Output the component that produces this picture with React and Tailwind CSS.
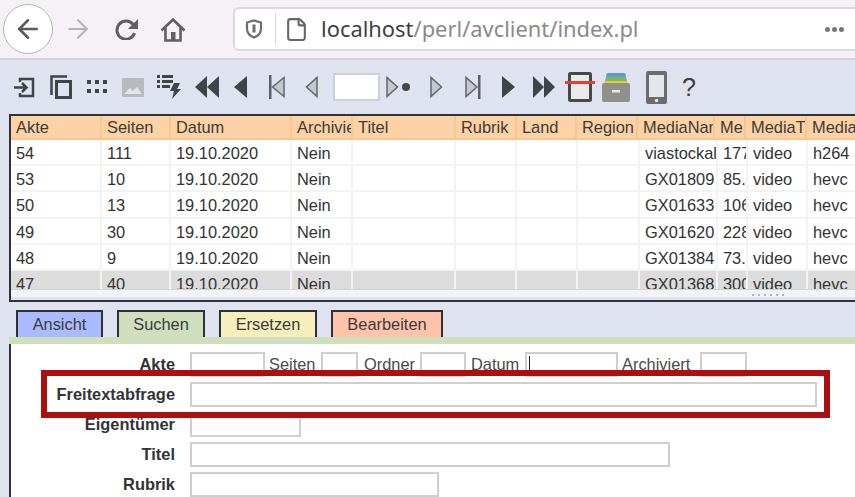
import React from "react";
import { ArrowLeft, ArrowRight, File } from "lucide-react";

const HEAD = ["Akte", "Seiten", "Datum", "Archiviert", "Titel", "Rubrik", "Land", "Region", "MediaName", "Me", "MediaType", "MediaCodec"];

const ROWS = [
  ["54", "111", "viastockal", "177.5", "h264"],
  ["53", "10", "GX01809", "85.12", "hevc"],
  ["50", "13", "GX01633", "106.4", "hevc"],
  ["49", "30", "GX01620", "228.1", "hevc"],
  ["48", "9", "GX01384", "73.21", "hevc"],
  ["47", "40", "GX01368", "300.2", "hevc"],
];

const inputCls = "h-[25px] border-2 border-[#cfcfcf] bg-white shrink-0 outline-none";

function Chrome() {
  return (
    <div className="h-[60px] bg-[#f6f1f6] border-b-2 border-[#d6d3d6] flex items-center shrink-0">
      <div className="w-[50px] h-[50px] ml-[3px] rounded-full bg-white border border-[#b5b3b5] flex items-center justify-center shrink-0">
        <ArrowLeft size={30} strokeWidth={2} className="text-[#5b5b5f]" />
      </div>
      <ArrowRight size={30} strokeWidth={1.6} className="text-[#b4b3b7] ml-[10px] shrink-0" />
      <svg width="24" height="22" viewBox="0 0 24 22" fill="none" className="ml-[22px] shrink-0">
        <path d="M18 6.500A9 9 0 1 0 19.500 15" stroke="#5f5f63" strokeWidth="3" />
        <path d="M23 1v10H13z" fill="#5f5f63" />
      </svg>
      <svg width="26" height="25" viewBox="0 0 26 25" fill="none" className="ml-[21px] shrink-0">
        <path d="M1.500 13.500 13 2.500l11.500 11" stroke="#5f5f63" strokeWidth="2.600" />
        <path d="M5.500 10.500V23.500h15V10.500" stroke="#5f5f63" strokeWidth="2.600" />
        <rect x="11" y="15" width="4.500" height="8" fill="#5f5f63" />
      </svg>
      <div className="ml-[47px] flex-1 h-[44px] bg-white border-2 border-r-0 border-[#dcd9dc] rounded-l-md flex items-center font-['Noto_Sans',sans-serif] text-[21.900px] text-[#8a898d]">
        <svg width="18" height="20" viewBox="0 0 18 20" className="ml-[10px] shrink-0" fill="none">
          <path d="M2 3.500 9 1.500l7 2v6c0 4.500-3 7.500-7 9-4-1.500-7-4.500-7-9z" stroke="#6e6e72" strokeWidth="2.200" />
          <path d="M9 5.500v8" stroke="#6e6e72" strokeWidth="3" />
        </svg>
        <div className="w-px h-[32px] bg-[#d9d7d9] ml-[12px] shrink-0" />
        <File size={25} strokeWidth={2} className="text-[#66666a] ml-[8px] shrink-0" />
        <span className="ml-[12px] whitespace-nowrap">
          <span className="text-[#3f3f42]">localhost</span>/perl/avclient/index.pl
        </span>
        <span className="ml-auto mr-[11px] flex gap-[2px]">
          <i className="w-[5px] h-[5px] rounded-full bg-[#77777b]" />
          <i className="w-[5px] h-[5px] rounded-full bg-[#77777b]" />
          <i className="w-[5px] h-[5px] rounded-full bg-[#77777b]" />
        </span>
      </div>
    </div>
  );
}

const DK = "#3f4447";
const GY = "#c4c7cc";

function Toolbar() {
  return (
    <div className="h-[54px] bg-[#dfe3ef] flex items-center shrink-0">
      <svg width="21" height="21" viewBox="0 0 21 21" fill="none" className="ml-[14px] shrink-0">
        <path d="M6 5V2h13v17H6v-3" stroke={DK} strokeWidth="2.500" />
        <path d="M0 10.500h12M8 6l4.500 4.500L8 15" stroke={DK} strokeWidth="2.500" />
      </svg>
      <svg width="22" height="24" viewBox="0 0 22 24" fill="none" className="ml-[15px] shrink-0">
        <path d="M1.500 20V1.500H17" stroke={DK} strokeWidth="2.500" />
        <rect x="6.500" y="6.500" width="14" height="16" stroke={DK} strokeWidth="3" />
      </svg>
      <svg width="21" height="14" viewBox="0 0 21 14" className="ml-[15px] shrink-0" fill={DK}>
        <rect x="0" y="0" width="4" height="4" /><rect x="8" y="0" width="4" height="4" /><rect x="16" y="0" width="4" height="4" />
        <rect x="0" y="9" width="4" height="4" /><rect x="8" y="9" width="4" height="4" /><rect x="16" y="9" width="4" height="4" />
      </svg>
      <svg width="22" height="19" viewBox="0 0 22 19" className="ml-[14px] shrink-0">
        <rect width="22" height="19" rx="1" fill="#b9babd" />
        <path d="M2 16l6-6 3 3 4-4 5 7z" fill="#e4e5e8" />
      </svg>
      <svg width="24" height="24" viewBox="0 0 24 24" className="ml-[13px] shrink-0" fill={DK}>
        <rect x="0" y="0" width="3" height="3" /><rect x="5" y="0" width="11" height="3" />
        <rect x="0" y="5" width="3" height="3" /><rect x="5" y="5" width="11" height="3" />
        <rect x="0" y="10" width="3" height="3" /><rect x="5" y="10" width="8" height="3" />
        <path d="M17 8h6l-3 6h4L15 24l2-8h-4z" />
      </svg>
      <svg width="24" height="22" viewBox="0 0 24 22" className="ml-[14px] shrink-0" fill={DK}>
        <path d="M12 0v22L0 11zM24 0v22L12 11z" />
      </svg>
      <svg width="13" height="22" viewBox="0 0 13 22" className="ml-[15px] shrink-0" fill={DK}>
        <path d="M13 0v22L0 11z" />
      </svg>
      <svg width="16" height="24" viewBox="0 0 16 24" className="ml-[22px] shrink-0">
        <rect x="0" y="0" width="2.500" height="24" fill="#5d6167" />
        <path d="M15 2.500v19L3.500 12z" fill={GY} stroke="#62666b" strokeWidth="1.500" />
      </svg>
      <svg width="13" height="24" viewBox="0 0 13 24" className="ml-[20px] shrink-0">
        <path d="M12 2.500v19L1.500 12z" fill={GY} stroke="#62666b" strokeWidth="1.500" />
      </svg>
      <input readOnly className="w-[47px] h-[28px] ml-[15px] bg-white border-2 border-[#cfd0d3] shrink-0 outline-none" />
      <svg width="13" height="24" viewBox="0 0 13 24" className="ml-[6px] shrink-0">
        <path d="M1 2.500v19L11.500 12z" fill={GY} stroke="#62666b" strokeWidth="1.500" />
      </svg>
      <span className="w-[8px] h-[8px] rounded-full bg-[#44484b] ml-[3px] shrink-0" />
      <svg width="13" height="24" viewBox="0 0 13 24" className="ml-[20px] shrink-0">
        <path d="M1 2.500v19L11.500 12z" fill={GY} stroke="#62666b" strokeWidth="1.500" />
      </svg>
      <svg width="16" height="24" viewBox="0 0 16 24" className="ml-[22px] shrink-0">
        <path d="M1 2.500v19L12 12z" fill={GY} stroke="#62666b" strokeWidth="1.500" />
        <rect x="13" y="0" width="2.500" height="24" fill="#5d6167" />
      </svg>
      <svg width="13" height="22" viewBox="0 0 13 22" className="ml-[21px] shrink-0" fill={DK}>
        <path d="M0 0v22L13 11z" />
      </svg>
      <svg width="22" height="22" viewBox="0 0 22 22" className="ml-[18px] shrink-0" fill={DK}>
        <path d="M0 0v22L11 11zM11 0v22L22 11z" />
      </svg>
      <svg width="30" height="30" viewBox="0 0 30 30" className="ml-[10px] shrink-0">
        <rect x="4.500" y="1.500" width="21" height="27" rx="1" fill="#ebebec" stroke="#46494b" strokeWidth="3" />
        <rect x="0" y="9" width="30" height="3" fill="#ee3b30" />
      </svg>
      <svg width="28" height="29" viewBox="0 0 28 29" className="ml-[7px] shrink-0">
        <path d="M5 0h18l1 4H4z" fill="#5b9bd8" />
        <path d="M4 4h20l1 4H3z" fill="#7dbb5a" />
        <path d="M3 8h22l1 4H2z" fill="#f2c53a" />
        <rect x="0" y="10" width="28" height="19" rx="2" fill="#8f8f8c" />
        <rect x="10" y="17" width="8" height="2.500" fill="#e9e9e9" />
      </svg>
      <svg width="21" height="33" viewBox="0 0 21 33" className="ml-[16px] shrink-0">
        <rect width="21" height="33" rx="2" fill="#6c6c6e" />
        <rect x="3" y="4" width="15" height="22" fill="#e4e6ed" />
        <circle cx="10.500" cy="29.500" r="1.800" fill="#e4e6ed" />
      </svg>
      <span className="ml-[15px] text-[25px] leading-none text-[#3a3c3e]">?</span>
    </div>
  );
}

function Table() {
  return (
    <div className="relative ml-[9px] h-[188px] border-2 border-[#2f3338] border-r-0 bg-[#dfe3ef] overflow-hidden shrink-0">
      <div className="grid grid-cols-[91px_69px_121px_61px_103px_61px_60px_61px_77px_31px_61px_60px] h-[24px] bg-[#fdd2a4] border-b-2 border-[#f6c695] text-[16.400px] text-[#3b3b3b]">
        {HEAD.map((h) => (
          <div key={h} className="pl-[5px] border-r-2 border-[#f6c695] overflow-hidden whitespace-nowrap leading-[22px]">
            {h}
          </div>
        ))}
      </div>
      <div className="h-[149px] bg-white overflow-hidden">
        {ROWS.map((r) => (
          <div
            key={r[0]}
            className={`grid grid-cols-[91px_69px_121px_61px_103px_61px_61px_62px_78px_30px_60px_60px] h-[26.200px] text-[#333] text-[16.400px] ${
              r[0] === "47" ? "bg-[#dcdcdc]" : "bg-white"
            }`}
          >
            {[r[0], r[1], "19.10.2020", "Nein", "", "", "", "", r[2], r[3], "video", r[4]].map((c, i) => (
              <div key={i} className="pl-[5px] border-r-2 border-b-2 border-[#f3f3f3] overflow-hidden whitespace-nowrap leading-[26px]">
                {c}
              </div>
            ))}
          </div>
        ))}
      </div>
      <div className="h-[8px] bg-[#f3f3f3] border-t border-[#d4d4d4]" />
      <svg width="34" height="4" viewBox="0 0 34 4" className="absolute left-[741px] top-[177px]" fill="#b5b5b5">
        <rect x="0" y="1" width="2" height="2" /><rect x="6" y="1" width="2" height="2" /><rect x="12" y="1" width="2" height="2" />
        <rect x="18" y="1" width="2" height="2" /><rect x="24" y="1" width="2" height="2" /><rect x="30" y="1" width="2" height="2" />
      </svg>
    </div>
  );
}

function Tab({ label, className }) {
  return (
    <div className={`h-[27px] border-2 border-b-0 border-[#2f3338] text-center text-[16.400px] leading-[24px] text-[#3b3b3b] ${className}`}>
      {label}
    </div>
  );
}

function Label({ children, className }) {
  return <span className={`text-[16.400px] text-[#4a4a4a] whitespace-nowrap shrink-0 ${className}`}>{children}</span>;
}

function FormRow({ label, w }) {
  return (
    <div className="flex items-center h-[25px] mt-[5px]">
      <span className="w-[164px] text-right font-bold text-[16.400px] text-[#333] whitespace-nowrap">{label}</span>
      <input readOnly className={`${inputCls} ml-[15px] ${w}`} />
    </div>
  );
}

function Form() {
  return (
    <div className="ml-[9px] border-l-2 border-[#2f3338] bg-white flex-1">
      <div className="h-[7px] bg-[#cfdfbd] -ml-[2px]" />
      <div className="pt-[8px]">
        <div className="flex items-center h-[25px]">
          <span className="w-[164px] text-right font-bold text-[16.400px] text-[#333]">Akte</span>
          <input readOnly className={`${inputCls} ml-[15px] w-[75px]`} />
          <Label className="ml-[4px] w-[52px]">Seiten</Label>
          <input readOnly className={`${inputCls} w-[37px]`} />
          <Label className="ml-[6px] w-[56px]">Ordner</Label>
          <input readOnly className={`${inputCls} w-[46px]`} />
          <Label className="ml-[5px] w-[54px]">Datum</Label>
          <div className={`${inputCls} relative w-[93px]`}>
            <span className="absolute left-[2px] top-[2px] w-px h-[18px] bg-[#222]" />
          </div>
          <Label className="ml-[4px] w-[78px]">Archiviert</Label>
          <input readOnly className={`${inputCls} w-[47px]`} />
        </div>
        <FormRow label="Freitextabfrage" w="w-[627px]" />
        <FormRow label="Eigentümer" w="w-[111px]" />
        <FormRow label="Titel" w="w-[480px]" />
        <FormRow label="Rubrik" w="w-[249px]" />
      </div>
    </div>
  );
}

export default function App() {
  return (
    <div className="relative w-[855px] h-[497px] overflow-hidden flex flex-col bg-[#dfe3ef] font-['Liberation_Sans',Arial,sans-serif]">
      <Chrome />
      <Toolbar />
      <Table />
      <div className="flex items-end h-[35px] pl-[16px] shrink-0">
        <Tab label="Ansicht" className="w-[87px] bg-[#aabbff]" />
        <Tab label="Suchen" className="w-[88px] ml-[14px] bg-[#cfdfbd]" />
        <Tab label="Ersetzen" className="w-[98px] ml-[14px] bg-[#f7efbb]" />
        <Tab label="Bearbeiten" className="w-[112px] ml-[14px] bg-[#ffc4ab]" />
      </div>
      <Form />
      {/* red highlight drawn over the form */}
      <div className="absolute left-[41px] top-[370px] w-[789px] h-[48px] border-[6px] border-[#ab1010]" />
    </div>
  );
}
